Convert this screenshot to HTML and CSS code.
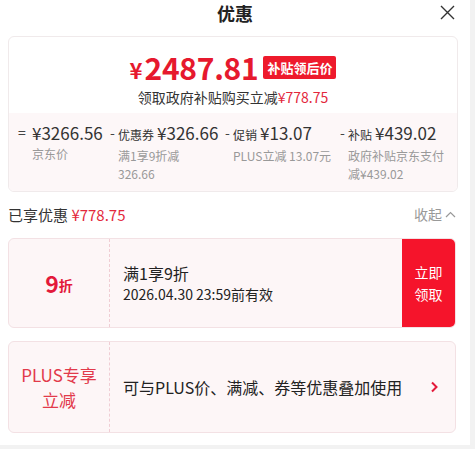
FILE: index.html
```html
<!DOCTYPE html>
<html lang="zh-CN">
  <head>
    <meta charset="UTF-8" />
    <meta name="viewport" content="width=device-width, initial-scale=1.0" />
    <title>优惠</title>
    <link rel="stylesheet" href="styles.css">
  </head>
  <body>
    <div class="sheet">
      <header class="head">
        <h1>优惠</h1>
        <button class="close" aria-label="关闭">
          <svg width="15" height="15" viewBox="0 0 15 15"><path d="M1 1 L14 14 M14 1 L1 14" stroke="#333" stroke-width="1.4" fill="none"/></svg>
        </button>
      </header>

      <section class="summary">
        <div class="final">
          <div class="final-price">
            <span class="yen">¥</span><span class="num">2487.81</span>
            <span class="badge">补贴领后价</span>
          </div>
          <p class="final-note">领取政府补贴购买立减<em>¥778.75</em></p>
        </div>
        <div class="breakdown">
          <div class="item">
            <span class="op eq">=</span>
            <div class="item-body">
              <div class="amt">¥3266.56</div>
              <div class="lbl">京东价</div>
            </div>
          </div>
          <div class="item">
            <span class="op">-</span>
            <div class="item-body">
              <div class="amt"><small>优惠券</small>¥326.66</div>
              <div class="lbl">满1享9折减<br>326.66</div>
            </div>
          </div>
          <div class="item">
            <span class="op">-</span>
            <div class="item-body">
              <div class="amt"><small>促销</small>¥13.07</div>
              <div class="lbl">PLUS立减 13.07元</div>
            </div>
          </div>
          <div class="item">
            <span class="op">-</span>
            <div class="item-body">
              <div class="amt"><small>补贴</small>¥439.02</div>
              <div class="lbl">政府补贴京东支付<br>减¥439.02</div>
            </div>
          </div>
        </div>
      </section>

      <div class="saved-row">
        <span class="saved">已享优惠 <em>¥778.75</em></span>
        <span class="fold">收起
          <svg width="11" height="7" viewBox="0 0 11 7"><path d="M1 6 L5.5 1.5 L10 6" stroke="#999" stroke-width="1.2" fill="none"/></svg>
        </span>
      </div>

      <div class="coupon">
        <div class="coupon-left"><span class="big">9</span><span class="unit">折</span></div>
        <div class="coupon-mid">
          <div class="coupon-title">满1享9折</div>
          <div class="coupon-date">2026.04.30 23:59前有效</div>
        </div>
        <button class="coupon-btn">立即<br>领取</button>
      </div>

      <div class="coupon plus">
        <div class="coupon-left plus-tag">PLUS专享<br>立减</div>
        <div class="coupon-mid">
          <div class="coupon-title">可与PLUS价、满减、券等优惠叠加使用</div>
        </div>
        <span class="coupon-arrow">
          <svg width="9" height="12" viewBox="0 0 9 12"><path d="M2 1.5 L6.5 6 L2 10.5" stroke="#e3193a" stroke-width="2" fill="none"/></svg>
        </span>
      </div>
    </div>
  </body>
</html>
```

FILE: styles.css
```css
html {
  background: #f2f2f2;
}
body {
  margin: 0;
  font-family: "Noto Sans CJK SC", "Noto Sans", sans-serif;
  font-size: 14px;
  color: #333;
}
.sheet {
  width: 470px;
  height: 445px;
  background: #fff;
  overflow: hidden;
}
.head {
  height: 36px;
  display: flex;
  justify-content: center;
  position: relative;
}
.head h1 {
  margin: 0;
  font-size: 18px;
  line-height: 26px;
  font-weight: bold;
  color: #222;
}
.close {
  position: absolute;
  right: 15px;
  top: 5px;
  padding: 0;
  border: none;
  background: none;
  line-height: 0;
}
.summary {
  margin-left: 8px;
  width: 448px;
  border: 1px solid #f0eaeb;
  border-radius: 6px;
  overflow: hidden;
}
.final {
  padding: 10px 0 6px;
  text-align: center;
}
.final-price {
  display: flex;
  justify-content: center;
  align-items: center;
  height: 40px;
  color: #e6192e;
  font-weight: bold;
}
.yen {
  font-size: 22px;
  margin-right: 2px;
  margin-top: 4px;
}
.num {
  font-size: 30px;
  letter-spacing: -0.3px;
}
.badge {
  margin-left: 5px;
  background: #ee1a2c;
  color: #fff;
  font-size: 13px;
  line-height: 23px;
  padding: 0 4px;
  border-radius: 2px;
}
.final-note {
  margin: 0;
  font-size: 14px;
  line-height: 20px;
  color: #333;
}
.final-note em,
.saved em {
  font-style: normal;
  color: #e3283c;
}
.breakdown {
  background: #fdf7f8;
  padding: 7px 0 8px 9px;
  display: grid;
  grid-template-columns: 92px 115px 115px 1fr;
}
.item {
  display: flex;
}
.op {
  width: 8px;
  line-height: 25px;
  font-size: 14px;
  color: #444;
}
.op.eq {
  width: 14px;
}
.amt {
  font-size: 17px;
  line-height: 25px;
  color: #333;
  white-space: nowrap;
}
.amt small {
  font-size: 12px;
  margin-right: 3px;
}
.lbl {
  font-size: 12px;
  line-height: 18px;
  color: #999;
  white-space: nowrap;
}
.saved-row {
  margin: 7px 14px 9px 8px;
  height: 30px;
  display: flex;
  justify-content: space-between;
  align-items: center;
}
.saved {
  font-size: 15px;
}
.fold {
  color: #999;
  font-size: 14px;
  display: flex;
  align-items: center;
  gap: 3px;
}
.coupon {
  margin-left: 8px;
  width: 448px;
  height: 90px;
  box-sizing: border-box;
  background: #fdf6f7;
  border: 1px solid #f3e1e4;
  border-radius: 6px;
  display: flex;
  overflow: hidden;
}
.coupon.plus {
  margin-top: 13px;
  height: 92px;
}
.coupon-left {
  width: 100px;
  border-right: 1px dashed #f0cdd4;
  display: flex;
  justify-content: center;
  align-items: center;
  color: #e3193a;
  font-weight: bold;
}
.big {
  font-size: 23px;
}
.unit {
  font-size: 14px;
  margin-top: 4px;
}
.plus-tag {
  font-weight: normal;
  font-size: 17px;
  line-height: 25px;
  text-align: center;
  color: #e23a4b;
}
.coupon-mid {
  flex: 1;
  padding-left: 13px;
  display: flex;
  flex-direction: column;
  justify-content: center;
}
.coupon-title {
  font-size: 16px;
  line-height: 22px;
  color: #222;
}
.coupon-date {
  font-size: 14px;
  line-height: 20px;
  color: #222;
}
.coupon-btn {
  width: 53px;
  border: none;
  background: #f5142b;
  color: #fff;
  font-family: inherit;
  font-size: 14px;
  line-height: 22px;
  padding: 0;
}
.coupon-arrow {
  width: 25px;
  display: flex;
  align-items: center;
}
```
